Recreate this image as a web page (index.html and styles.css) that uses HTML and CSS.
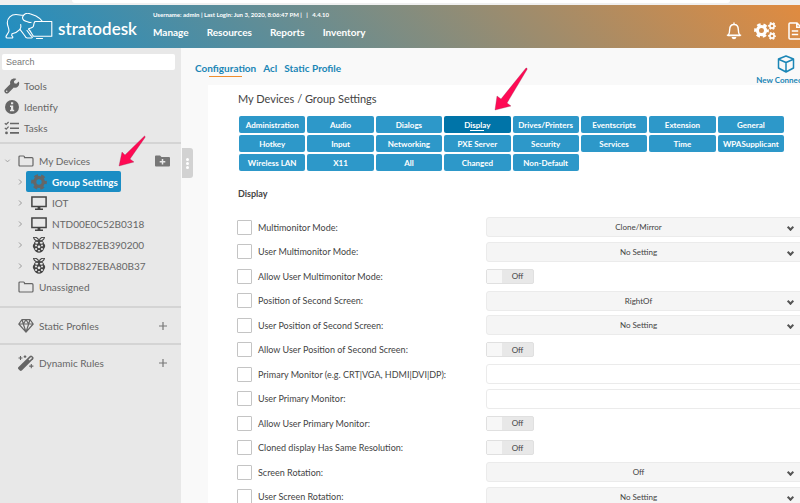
FILE: index.html
```html
<!DOCTYPE html>
<html lang="en">
<head>
    <meta charset="UTF-8">
    <meta name="viewport" content="width=device-width, initial-scale=1.0">
    <title>Stratodesk - Group Settings</title>
    <link rel="stylesheet" href="styles.css">
</head>
<body>
    <!-- shared icons -->
    <svg class="sprite" aria-hidden="true">
        <symbol id="i-gear" viewBox="0 0 24 24">
            <circle cx="12" cy="12" r="6.500" fill="none" stroke="currentColor" stroke-width="5"/>
            <circle cx="12" cy="12" r="9.800" fill="none" stroke="currentColor" stroke-width="4" pathLength="60" stroke-dasharray="5.500 4.500" stroke-dashoffset="2.750"/>
        </symbol>
        <symbol id="i-folder" viewBox="0 0 16 12">
            <path d="M1 10V2q0-1 1-1h3.500q1 0 1 1v.7H14q1 0 1 1V10q0 1-1 1H2q-1 0-1-1z" fill="none" stroke="currentColor" stroke-width="1.200"/>
        </symbol>
        <symbol id="i-monitor" viewBox="0 0 16 14">
            <path d="M.9.900h14.200v9.500H.9z" fill="none" stroke="currentColor" stroke-width="1.500"/>
            <path d="M6.600 10.500h2.800v2H12V14H4v-1.500h2.600z" fill="currentColor"/>
        </symbol>
        <symbol id="i-pi" viewBox="0 0 14 16">
            <path d="M6.700 3.700C4.500 4.300 2.200 2.900 1.600.6c2-.8 4.600.2 5.100 3.100zM7.300 3.700c2.200.6 4.500-.8 5.100-3.100-2-.8-4.600.2-5.100 3.100z" fill="none" stroke="currentColor" stroke-width="1.100"/>
            <path d="M7 3.600c3.300 0 5 1.300 5 3 1.700 1.500 1.500 3.800.2 4.800C11.500 14 9 15.800 7 15.800S2.500 14 1.800 11.400C.5 10.400.3 8.100 2 6.600c0-1.700 1.700-3 5-3z" fill="currentColor"/>
            <g fill="#e8e8e8">
                <ellipse cx="4.700" cy="5.800" rx="1.500" ry="1"/>
                <ellipse cx="9.300" cy="5.800" rx="1.500" ry="1"/>
                <circle cx="7" cy="9.800" r="1.400"/>
                <circle cx="4" cy="8.600" r="1"/>
                <circle cx="10" cy="8.600" r="1"/>
                <circle cx="4.100" cy="12" r="1.100"/>
                <circle cx="9.900" cy="12" r="1.100"/>
                <ellipse cx="7" cy="13.700" rx="1.200" ry=".8"/>
            </g>
        </symbol>
        <symbol id="i-right" viewBox="0 0 6 8">
            <path d="M1.500 1.500L4 4 1.500 6.500" fill="none" stroke="currentColor"/>
        </symbol>
        <symbol id="i-plus" viewBox="0 0 10 10">
            <path d="M5 1v8M1 5h8" fill="none" stroke="currentColor" stroke-width="1.200"/>
        </symbol>
    </svg>

    <div class="strip"><span class="strip-field"></span></div>

    <header class="topbar">
        <a class="brand" href="#">
            <svg class="brand-logo" viewBox="0 0 48 27" aria-hidden="true">
                <g fill="none" stroke="currentColor" stroke-width="1.100" stroke-linejoin="round" stroke-linecap="round">
                    <path d="M11 1.500C6 1.500 2.300 5 2.300 9.700c0 3.500 2 5.500 1.700 8.300-.3 2-3 4-3 6 0 .8.700 1 1.500 1h4.200c1.800 0 1.300-1.700 0-2.200l.3-2.100c3-.7 6-2.200 8-4.400l5 6.700c.5 1.300 1.300 2 2.300 2h4.200c1.300 0 .9-1.600-.5-2.200L22 17.500"/>
                    <path d="M11 1.500c3 0 5 1 7.500.8 1.300-1.500 4-2.500 6.500-1.500l6 2.200c2 1 4.500 3 6.500 5.500"/>
                    <path d="M18.500 2.300c-2 2.200-.8 5.200 2 5.800 3 .7 3.500 2 5.500 1.300M15 16.300c1-1.500 1.200-3 .7-4.800"/>
                    <path d="M30 8.500h16.800v14.700H28.500c-1.500-1.700-2.700-5-5-7.200 1.700-1.300 4-1 4.800-2.500.7-1.500.2-3.500 1.700-5z"/>
                    <path d="M31.500 25.500h6"/>
                </g>
            </svg>
            <span class="brand-name">stratodesk</span>
        </a>
        <div class="top-center">
            <div class="session">Username: admin | Last Login: Jun 3, 2020, 8:06:47 PM |&nbsp;&nbsp; |&nbsp;&nbsp; 4.4.10</div>
            <nav class="main-nav">
                <a href="#">Manage</a>
                <a href="#">Resources</a>
                <a href="#">Reports</a>
                <a href="#">Inventory</a>
            </nav>
        </div>
        <div class="top-actions">
            <button type="button" aria-label="Notifications">
                <svg width="16" height="18" viewBox="0 0 16 18"><path d="M8 .5v1.500M2 13.500c1.500-1.500 1.700-3 1.700-6C3.700 4.500 5.500 2.500 8 2.500s4.300 2 4.300 5c0 3 .2 4.500 1.700 6z" fill="none" stroke="currentColor" stroke-width="1.400" stroke-linejoin="round"/><path d="M.8 13.200h14.400" stroke="currentColor" stroke-width="1.200"/><path d="M5.700 15h4.600c0 3-4.600 3-4.600 0z" fill="currentColor"/></svg>
            </button>
            <button type="button" aria-label="Settings">
                <svg width="22" height="18" viewBox="0 0 22 18"><use href="#i-gear" x="0" y="1" width="15" height="15"/><use href="#i-gear" x="14" y="0" width="8" height="8"/><use href="#i-gear" x="14" y="10" width="8" height="8"/></svg>
            </button>
            <button type="button" aria-label="Documents">
                <svg width="14" height="18" viewBox="0 0 14 18"><path d="M1 2q0-1 1-1h7l4 4v11q0 1-1 1H2q-1 0-1-1zM8.800 1v4.300H13" fill="none" stroke="currentColor" stroke-width="1.500"/><path d="M3.800 9h6.400M3.800 12.500h6.400" stroke="currentColor" stroke-width="1.500"/></svg>
            </button>
        </div>
    </header>

    <div class="layout">
        <aside class="sidebar">
            <input class="search" type="search" placeholder="Search" aria-label="Search">
            <nav class="side-group tools">
                <a class="tool" href="#">
                    <svg width="16" height="16" viewBox="0 0 16 16"><path d="M14.800 3.500l-2.500 2.300-2-.5-.4-2L12.300.9C10.500 0 8.300.4 7 1.900 6 3.100 5.800 4.700 6.300 6L.9 11.500c-2 2 1.400 5.500 3.500 3.500l5.400-5.400c3.500 1.100 6.500-2.500 5-6.100zM2.700 14a.8.800 0 110-1.600.8.800 0 010 1.600z" fill="currentColor"/></svg>
                    <span>Tools</span>
                </a>
                <a class="tool" href="#">
                    <svg width="16" height="16" viewBox="0 0 16 16"><circle cx="8" cy="8" r="7" fill="currentColor"/><path d="M7 3.200h2.200v2H7zM6 6.500h3.200v4.200h1v1.500H6v-1.500h1V8H6z" fill="#e8e8e8"/></svg>
                    <span>Identify</span>
                </a>
                <a class="tool" href="#">
                    <svg width="16" height="16" viewBox="0 0 16 16"><path d="M6 3.500h9M6 8.200h9M6 12.900h9" stroke="currentColor" stroke-width="1.600"/><path d="M.8 3.200l1.400 1.300L4.600 2M.8 7.900l1.400 1.300 2.400-2.500" fill="none" stroke="currentColor" stroke-width="1.200"/><circle cx="2.500" cy="12.900" r="1.400" fill="currentColor"/></svg>
                    <span>Tasks</span>
                </a>
            </nav>
            <div class="side-group tree">
                <div class="node">
                    <svg class="caret" viewBox="0 0 8 6"><path d="M1.500 1.500L4 4l2.500-2.500" fill="none" stroke="currentColor"/></svg>
                    <a href="#"><svg class="node-icon"><use href="#i-folder"/></svg><span>My Devices</span></a>
                    <button class="node-add" type="button" aria-label="Add folder">
                        <svg width="15" height="12" viewBox="0 0 15 12"><path d="M0 1.500Q0 .5 1 .5h4l1.500 1.500H14q1 0 1 1v7.500q0 1-1 1H1q-1 0-1-1z" fill="currentColor"/><path d="M7.500 4v5.500M4.700 6.800h5.600" stroke="#e8e8e8" stroke-width="1.500"/></svg>
                    </button>
                </div>
                <div class="node child selected">
                    <svg class="caret"><use href="#i-right"/></svg>
                    <a href="#"><svg class="node-icon"><use href="#i-gear"/></svg><span>Group Settings</span></a>
                </div>
                <div class="node child">
                    <svg class="caret"><use href="#i-right"/></svg>
                    <a href="#"><svg class="node-icon dark"><use href="#i-monitor"/></svg><span>IOT</span></a>
                </div>
                <div class="node child">
                    <svg class="caret"><use href="#i-right"/></svg>
                    <a href="#"><svg class="node-icon dark"><use href="#i-monitor"/></svg><span>NTD00E0C52B0318</span></a>
                </div>
                <div class="node child">
                    <svg class="caret"><use href="#i-right"/></svg>
                    <a href="#"><svg class="node-icon dark"><use href="#i-pi"/></svg><span>NTDB827EB390200</span></a>
                </div>
                <div class="node child">
                    <svg class="caret"><use href="#i-right"/></svg>
                    <a href="#"><svg class="node-icon dark"><use href="#i-pi"/></svg><span>NTDB827EBA80B37</span></a>
                </div>
                <div class="node">
                    <span class="caret"></span>
                    <a href="#"><svg class="node-icon"><use href="#i-folder"/></svg><span>Unassigned</span></a>
                </div>
            </div>
            <div class="side-group section">
                <a href="#">
                    <svg class="node-icon" viewBox="0 0 16 14"><path d="M4 .7h8l3.200 4.300L8 13.200.8 5zM.8 5h14.400M4 .7L5.300 5 8 13l2.700-8L12 .7M5.300 5L8 .8 10.700 5" fill="none" stroke="currentColor" stroke-width="1.200" stroke-linejoin="round"/></svg>
                    <span>Static Profiles</span>
                </a>
                <button class="node-add" type="button" aria-label="Add static profile"><svg width="10" height="10"><use href="#i-plus"/></svg></button>
            </div>
            <div class="side-group section">
                <a href="#">
                    <svg class="node-icon" viewBox="0 0 16 16"><path d="M.3 12.300L11.800.900q1.200-1 2.300 0l1 1q1 1.100 0 2.300L3.800 15.500q-1.100.9-2 0L.3 14q-.8-.8 0-1.700z" fill="currentColor"/><path d="M10.500 4.600l2.600-2.600 1 1-2.600 2.600z" fill="#e8e8e8"/><path d="M2.500 1v4M.5 3h4M7 .3v2.600M5.700 1.600h2.600M13.300 9v4.200M11.200 11.100h4.200" stroke="currentColor" stroke-width="1.100"/></svg>
                    <span>Dynamic Rules</span>
                </a>
                <button class="node-add" type="button" aria-label="Add dynamic rule"><svg width="10" height="10"><use href="#i-plus"/></svg></button>
            </div>
        </aside>

        <main class="content">
            <button class="handle" type="button" aria-label="Toggle sidebar"><i></i><i></i><i></i></button>
            <div class="content-head">
                <nav class="tabs">
                    <a class="active" href="#">Configuration</a>
                    <a href="#">Acl</a>
                    <a href="#">Static Profile</a>
                </nav>
                <a class="new-connection" href="#">
                    <svg width="18" height="18" viewBox="0 0 18 18"><path d="M9 1l7.500 3v9L9 17l-7.500-4V4zM1.500 4.200L9 7.500l7.500-3.300M9 7.500V17" fill="none" stroke="currentColor" stroke-width="1.500" stroke-linejoin="round"/></svg>
                    <span>New Connection</span>
                </a>
            </div>

            <section class="panel">
                <h1>My Devices / Group Settings</h1>
                <div class="categories">
                    <button type="button">Administration</button>
                    <button type="button">Audio</button>
                    <button type="button">Dialogs</button>
                    <button type="button" class="active">Display</button>
                    <button type="button">Drives/Printers</button>
                    <button type="button">Eventscripts</button>
                    <button type="button">Extension</button>
                    <button type="button">General</button>
                    <button type="button">Hotkey</button>
                    <button type="button">Input</button>
                    <button type="button">Networking</button>
                    <button type="button">PXE Server</button>
                    <button type="button">Security</button>
                    <button type="button">Services</button>
                    <button type="button">Time</button>
                    <button type="button">WPASupplicant</button>
                    <button type="button">Wireless LAN</button>
                    <button type="button">X11</button>
                    <button type="button">All</button>
                    <button type="button">Changed</button>
                    <button type="button">Non-Default</button>
                </div>
                <h2>Display</h2>
                <form class="settings">
                    <div class="row">
                        <input type="checkbox" class="tick" aria-labelledby="l1">
                        <label id="l1" for="f1">Multimonitor Mode:</label>
                        <div class="select"><select id="f1"><option>Clone/Mirror</option></select></div>
                    </div>
                    <div class="row">
                        <input type="checkbox" class="tick" aria-labelledby="l2">
                        <label id="l2" for="f2">User Multimonitor Mode:</label>
                        <div class="select"><select id="f2"><option>No Setting</option></select></div>
                    </div>
                    <div class="row">
                        <input type="checkbox" class="tick" aria-labelledby="l3">
                        <label id="l3" for="f3">Allow User Multimonitor Mode:</label>
                        <div class="toggle"><input type="checkbox" id="f3"><span>Off</span></div>
                    </div>
                    <div class="row">
                        <input type="checkbox" class="tick" aria-labelledby="l4">
                        <label id="l4" for="f4">Position of Second Screen:</label>
                        <div class="select"><select id="f4"><option>RightOf</option></select></div>
                    </div>
                    <div class="row">
                        <input type="checkbox" class="tick" aria-labelledby="l5">
                        <label id="l5" for="f5">User Position of Second Screen:</label>
                        <div class="select"><select id="f5"><option>No Setting</option></select></div>
                    </div>
                    <div class="row">
                        <input type="checkbox" class="tick" aria-labelledby="l6">
                        <label id="l6" for="f6">Allow User Position of Second Screen:</label>
                        <div class="toggle"><input type="checkbox" id="f6"><span>Off</span></div>
                    </div>
                    <div class="row">
                        <input type="checkbox" class="tick" aria-labelledby="l7">
                        <label id="l7" for="f7">Primary Monitor (e.g. CRT|VGA, HDMI|DVI|DP):</label>
                        <input type="text" class="text" id="f7">
                    </div>
                    <div class="row">
                        <input type="checkbox" class="tick" aria-labelledby="l8">
                        <label id="l8" for="f8">User Primary Monitor:</label>
                        <input type="text" class="text" id="f8">
                    </div>
                    <div class="row">
                        <input type="checkbox" class="tick" aria-labelledby="l9">
                        <label id="l9" for="f9">Allow User Primary Monitor:</label>
                        <div class="toggle"><input type="checkbox" id="f9"><span>Off</span></div>
                    </div>
                    <div class="row">
                        <input type="checkbox" class="tick" aria-labelledby="l10">
                        <label id="l10" for="f10">Cloned display Has Same Resolution:</label>
                        <div class="toggle"><input type="checkbox" id="f10"><span>Off</span></div>
                    </div>
                    <div class="row">
                        <input type="checkbox" class="tick" aria-labelledby="l11">
                        <label id="l11" for="f11">Screen Rotation:</label>
                        <div class="select"><select id="f11"><option>Off</option></select></div>
                    </div>
                    <div class="row">
                        <input type="checkbox" class="tick" aria-labelledby="l12">
                        <label id="l12" for="f12">User Screen Rotation:</label>
                        <div class="select"><select id="f12"><option>No Setting</option></select></div>
                    </div>
                </form>
            </section>
        </main>
    </div>

    <!-- pointers to the selected node and category -->
    <svg class="pointer pointer-node" width="30" height="34" viewBox="0 0 30 34" aria-hidden="true">
        <path d="M1 32L4 18l3 3L26.500 2q1 0 .5 1.500L12 25l4 3z"/>
    </svg>
    <svg class="pointer pointer-category" width="38" height="46" viewBox="0 0 38 46" aria-hidden="true">
        <path d="M1 44L3 30l4 3L32 2q1.500-.5 1 1.500L13 37l4 3z"/>
    </svg>
</body>
</html>
```
FILE: styles.css
```css
* {
    box-sizing: border-box;
}
body {
    margin: 0;
    height: 100vh;
    overflow: hidden;
    display: flex;
    flex-direction: column;
    font-family: Lato, "Liberation Sans", sans-serif;
    font-size: 9px;
    color: #444;
    background: #f9f9f9;
}
a {
    color: inherit;
    text-decoration: none;
}
button {
    font-family: inherit;
    border: none;
    padding: 0;
    background: none;
    color: inherit;
    cursor: pointer;
}
svg {
    display: block;
    flex: none;
}
.sprite {
    position: absolute;
    width: 0;
    height: 0;
}
.strip {
    flex: none;
    height: 5px;
    padding: 0 70px 0 72px;
    background: #f0f0f0;
}
.strip-field {
    display: block;
    height: 3px;
    border-radius: 0 0 3px 3px;
    background: #fff;
}

/* header */
.topbar {
    flex: none;
    height: 43px;
    display: flex;
    align-items: center;
    padding-left: 5px;
    color: #fff;
    background: linear-gradient(45deg, #1e8ec3, #e08b40);
}
.brand {
    display: flex;
    align-items: center;
    gap: 5px;
    width: 148px;
}
.brand-logo {
    width: 48px;
    height: 27px;
}
.brand-name {
    font-size: 17px;
    font-weight: 600;
    line-height: 20px;
    padding-top: 5px;
}
.top-center {
    flex: 1;
}
.session {
    font-size: 6px;
    font-weight: bold;
    line-height: 8px;
    white-space: nowrap;
}
.main-nav {
    display: flex;
    gap: 18px;
    margin-top: 2px;
    font-size: 10px;
    font-weight: bold;
    line-height: 22px;
}
.top-actions {
    display: flex;
    align-items: center;
    gap: 12px;
    padding-top: 8px;
    margin-right: -2px;
}

/* sidebar */
.layout {
    flex: 1;
    min-height: 0;
    display: flex;
}
.sidebar {
    flex: none;
    width: 181px;
    padding-top: 6px;
    background: #e8e8e8;
    color: #666;
    font-size: 10px;
}
.search {
    display: block;
    width: 173px;
    height: 16px;
    margin-left: 2px;
    padding: 0 4px;
    border: none;
    border-radius: 2px;
    background: #fff;
    font: 9px "Liberation Sans", Arial, sans-serif;
}
.search::placeholder {
    color: #777;
}
.side-group + .side-group {
    border-top: 2px solid #d4d4d4;
}
.tools {
    padding: 5px 0 4px 4px;
}
.tool {
    display: flex;
    align-items: center;
    gap: 4px;
    height: 21px;
}
.tree {
    padding: 6px 0 9px;
}
.node {
    display: flex;
    align-items: center;
    height: 21px;
    padding-left: 4px;
}
.node a,
.section a {
    display: flex;
    align-items: center;
    gap: 5px;
    height: 21px;
}
.node a {
    padding-left: 7px;
}
.child {
    gap: 2px;
    padding-left: 17px;
}
.child a {
    padding-left: 5px;
}
.caret {
    width: 7px;
    height: 8px;
    color: #999;
}
.node-icon {
    width: 16px;
    height: 16px;
}
.dark {
    color: #444;
}
.selected a {
    padding-right: 3px;
    border-radius: 2px;
    background: #1b8dc4;
    color: #fff;
    font-weight: bold;
}
.selected .node-icon {
    color: #666;
}
.node-add {
    margin-left: auto;
    margin-right: 11px;
    color: #777;
}
.section {
    display: flex;
    align-items: center;
    height: 37px;
    padding-left: 18px;
}
.section .node-add {
    margin-right: 13px;
}

/* content */
.content {
    position: relative;
    flex: 1;
    min-width: 0;
    display: flex;
    flex-direction: column;
    padding-left: 27px;
}
.handle {
    position: absolute;
    left: 1px;
    top: 100px;
    width: 11px;
    height: 30px;
    display: flex;
    flex-direction: column;
    align-items: center;
    justify-content: center;
    gap: 1px;
    border-radius: 0 3px 3px 0;
    background: #d2d2d2;
}
.handle i {
    width: 3px;
    height: 3px;
    border-radius: 50%;
    background: #fff;
}
.content-head {
    flex: none;
    height: 37px;
    display: flex;
    justify-content: space-between;
    color: #1b86b6;
}
.tabs {
    display: flex;
    align-items: flex-start;
    gap: 7px;
    margin-left: -13px;
    padding-top: 14px;
    font-size: 10px;
    font-weight: bold;
    line-height: 13px;
}
.tabs .active::after {
    content: "";
    display: block;
    width: 33px;
    height: 1px;
    margin: 1px auto 0;
    background: #f08c2e;
}
.new-connection {
    display: flex;
    flex-direction: column;
    align-items: center;
    padding-top: 7px;
    margin-right: -16px;
    font-size: 8px;
    font-weight: bold;
    line-height: 14px;
    white-space: nowrap;
}
.panel {
    flex: 1;
    min-height: 0;
    overflow: hidden;
    padding-left: 30px;
    background: #fff;
}
.panel h1 {
    margin: 0;
    padding: 5px 0 8px;
    font-size: 11px;
    font-weight: normal;
    line-height: 18px;
}
.categories {
    display: grid;
    grid-template-columns: repeat(8, 1fr);
    gap: 2px;
    margin: 0 16px 0 1px;
}
.categories button {
    position: relative;
    height: 17px;
    border-radius: 2px;
    background: #2d98c9;
    color: #fff;
    font-size: 8px;
    font-weight: bold;
    white-space: nowrap;
}
.categories .active {
    background: #0074a8;
}
.categories .active::after {
    content: "";
    position: absolute;
    left: 50%;
    bottom: 2px;
    width: 14px;
    height: 1px;
    margin-left: -7px;
    background: #fff;
}
.panel h2 {
    margin: 0;
    padding: 16px 0 14px;
    font-size: 9px;
    font-weight: bold;
    line-height: 14px;
}

/* settings rows */
.settings {
    display: grid;
    grid-auto-rows: 24px 25px;
    margin: 0 -3px 0 -1px;
}
.row {
    display: grid;
    grid-template-columns: 15px 222px 1fr;
    gap: 6px;
    align-items: center;
}
.tick {
    appearance: none;
    width: 15px;
    height: 15px;
    margin: 0;
    border: 1px solid #c4c4c4;
    border-radius: 1px;
    background: #fff;
}
.select {
    position: relative;
}
.select::after {
    content: "";
    position: absolute;
    right: 10px;
    top: 8px;
    box-sizing: border-box;
    width: 5px;
    height: 5px;
    border: solid #555;
    border-width: 0 2px 2px 0;
    transform: rotate(45deg);
}
.select select,
.text {
    display: block;
    width: 100%;
    height: 20px;
    border: 1px solid #ebebeb;
    border-radius: 3px;
    font-family: inherit;
    font-size: 8px;
    color: #444;
}
.select select {
    appearance: none;
    padding: 0 12px 0 0;
    background: #f5f5f5;
    text-align: center;
    text-align-last: center;
}
.text {
    padding: 0 6px;
    background: #fff;
}
.toggle {
    display: flex;
    align-items: center;
    width: 48px;
    height: 15px;
    border: 1px solid #e0e0e0;
    border-radius: 2px;
    background: #e8e8e8;
    font-size: 8px;
}
.toggle input {
    appearance: none;
    width: 15px;
    height: 13px;
    margin: 0;
    background: #f7f7f7;
}
.toggle span {
    flex: 1;
    text-align: center;
}

/* pointers */
.pointer {
    position: absolute;
    fill: #ff0a54;
    stroke: #8d3354;
    stroke-width: 1px;
    stroke-opacity: 0.3;
}
.pointer-node {
    left: 118px;
    top: 134px;
}
.pointer-category {
    left: 494px;
    top: 66px;
}
```
